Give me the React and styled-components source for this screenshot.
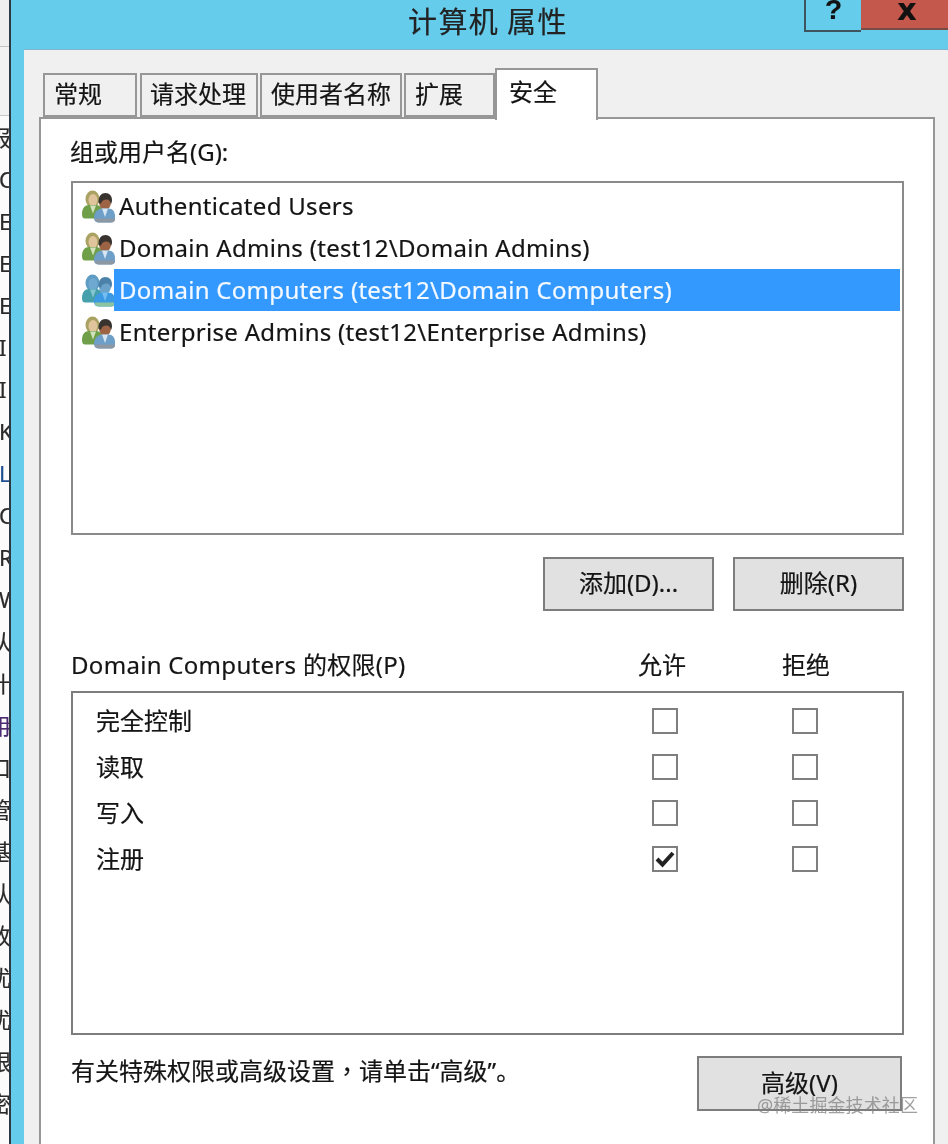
import React from "react";
import styled, { createGlobalStyle } from "styled-components";

const Global = createGlobalStyle`
  html, body { margin: 0; padding: 0; background: #f0f0f0; }
  body { font-family: "Noto Sans", "Noto Sans CJK SC", sans-serif; color: #141414; }
`;

const Page = styled.div`
  display: flex;
  width: 948px;
  height: 1144px;
  overflow: hidden;
  position: relative;
  filter: blur(0.5px);
  -webkit-text-stroke: 0.2px;
`;

const Strip = styled.div`
  width: 9px;
  flex: none;
  background: #fbfbfb;
  border-right: 2px solid #2b3a44;
  overflow: hidden;
`;
const StripHead = styled.div`
  height: 46px;
  background: #efefef;
  border-bottom: 1px solid #c4c4c4;
`;
const StripBand = styled.div`
  height: 68px;
  background: #f2f2f2;
  border-bottom: 1px solid #c8c8c8;
`;
const StripRow = styled.div`
  height: 42px;
  width: 30px;
  margin-left: ${(p) => (p.$cjk ? "-11px" : "-1px")};
  font: 22px/42px "Noto Sans", "Noto Sans CJK SC", sans-serif;
  color: ${(p) => p.$color || "#2a2a2a"};
  white-space: nowrap;
`;

const Window = styled.div`
  flex: 1;
  min-width: 0;
  background: #66ccec;
  display: flex;
  flex-direction: column;
`;
const TitleBar = styled.div`
  height: 49px;
  flex: none;
  display: flex;
  align-items: flex-start;
  padding-left: 397px;
`;
const Title = styled.div`
  font: 29px/40px "Noto Sans CJK SC", sans-serif;
  color: #222;
  white-space: nowrap;
  letter-spacing: 1.4px;
`;
const Controls = styled.div`
  margin-left: auto;
  display: flex;
  height: 32px;
`;
const HelpBtn = styled.div`
  width: 55px;
  height: 30px;
  border-left: 2px solid #3e5560;
  border-bottom: 2px solid #3e5560;
  font: bold 28px/20px "Liberation Sans", sans-serif;
  color: #111;
  text-align: center;
`;
const CloseBtn = styled.div`
  width: 87px;
  height: 30px;
  background: #c4584c;
  border-bottom: 2px solid #7a4a44;
  font: bold 30px/19px "DejaVu Sans", sans-serif;
  color: #111;
  text-align: center;
  padding-left: 5px;
  box-sizing: border-box;
`;

const Body = styled.div`
  flex: 1;
  margin-left: 13px;
  background: #f0f0f0;
  border-top: 1px solid #7fb5cf;
  padding: 18px 0 0 15px;
  display: flex;
  flex-direction: column;
`;
const TabBar = styled.div`
  height: 49px;
  flex: none;
  display: flex;
  align-items: flex-end;
  padding-left: 4px;
  gap: 2px;
`;
const Tab = styled.div`
  box-sizing: border-box;
  width: ${(p) => p.$w}px;
  height: ${(p) => (p.$active ? 52 : 44)}px;
  margin-bottom: ${(p) => (p.$active ? -3 : 0)}px;
  margin-left: ${(p) => p.$ml || 0}px;
  background: ${(p) => (p.$active ? "#fff" : "#f0f0f0")};
  border: 2px solid #979797;
  border-bottom: ${(p) => (p.$active ? "none" : "2px solid #979797")};
  font-size: 24px;
  line-height: ${(p) => (p.$active ? 44 : 38)}px;
  padding-left: ${(p) => p.$pl}px;
  white-space: nowrap;
  position: relative;
  z-index: ${(p) => (p.$active ? 2 : 0)};
`;
const Panel = styled.div`
  flex: 1;
  width: 896px;
  box-sizing: border-box;
  background: #fff;
  border: 2px solid #979797;
  border-bottom: none;
  padding: 17px 29px 0 30px;
  display: flex;
  flex-direction: column;
`;
const Text = styled.div`
  font-size: 24px;
  line-height: 32px;
  white-space: nowrap;
`;
const Comma = styled.span`
  font-family: "Noto Sans CJK TC", sans-serif;
`;
const GroupLabel = styled(Text)`
  margin: 0 0 13px -1px;
`;
const FooterText = styled(Text)`
  margin-top: -2px;
`;
const ListBox = styled.div`
  box-sizing: border-box;
  height: 354px;
  border: 2px solid #8a8a8a;
  padding: 2px 2px 0 9px;
  flex: none;
`;
const UserRow = styled.div`
  display: flex;
  align-items: center;
  height: 42px;
`;
const UserName = styled.div`
  flex: 1;
  height: 42px;
  padding-left: 5px;
  font-size: 24px;
  line-height: 41px;
  letter-spacing: 0.3px;
  white-space: nowrap;
  background: ${(p) => (p.$selected ? "#3399ff" : "transparent")};
  color: ${(p) => (p.$selected ? "#f4f9ff" : "#141414")};
`;
const ButtonRow = styled.div`
  display: flex;
  justify-content: flex-end;
  gap: 19px;
  margin-top: 22px;
`;
const Button = styled.div`
  box-sizing: border-box;
  width: ${(p) => p.$w}px;
  height: ${(p) => p.$h}px;
  background: #e1e1e1;
  border: 2px solid #7d7d7d;
  display: flex;
  align-items: center;
  justify-content: center;
  padding-bottom: 5px;
  font-size: 24px;
  white-space: nowrap;
`;
const PermHeader = styled.div`
  display: grid;
  grid-template-columns: 1fr 144px 144px;
  padding-right: 26px;
  margin: 38px 0 10px;
  font-size: 24px;
  line-height: 32px;
`;
const PermTitle = styled.div`
  letter-spacing: 0.3px;
  white-space: nowrap;
`;
const ColHead = styled.div`
  text-align: center;
`;
const PermBox = styled.div`
  box-sizing: border-box;
  height: 344px;
  flex: none;
  border: 2px solid #7d7d7d;
  padding: 5px 27px 0 23px;
`;
const PermRow = styled.div`
  display: grid;
  grid-template-columns: 1fr 140px 140px;
  height: 46px;
  align-items: center;
  font-size: 24px;
`;
const PermName = styled.div`
  padding-bottom: 4px;
`;
const CheckCell = styled.div`
  display: flex;
  justify-content: center;
`;
const CheckBox = styled.div`
  box-sizing: border-box;
  width: 26px;
  height: 26px;
  border: 2px solid #7f7f7f;
  display: flex;
  align-items: center;
  justify-content: center;
  background: #fff;
`;
const Footer = styled.div`
  display: flex;
  justify-content: space-between;
  align-items: flex-start;
  margin-top: 21px;
  padding-right: 2px;
`;
const Watermark = styled.div`
  position: absolute;
  right: 30px;
  top: 1093px;
  font-size: 18px;
  line-height: 24px;
  color: rgba(130, 130, 130, 0.75);
  white-space: nowrap;
  letter-spacing: 0.1px;
  -webkit-text-stroke: 0;
`;

function UsersIcon({ selected }) {
  const c = selected
    ? { backHair: "#5f9cc4", backFace: "#6fa9d2", backBody: "#45a0ac", backLight: "#86c6d2", hair: "#4c82aa", face: "#6aa2ca", body: "#3c9ae2", bodyLight: "#74bff0", edge: "#8cc4a0" }
    : { backHair: "#a9a262", backFace: "#e0c49c", backBody: "#6f9f48", backLight: "#d2e2bc", hair: "#38332f", face: "#9c6444", body: "#6e9fc9", bodyLight: "#d6e6f2", edge: "#8c98a4" };
  return (
    <svg width="33" height="33" viewBox="0 0 33 33" style={{ flex: "none", marginRight: -1 }}>
      <ellipse cx="10.500" cy="9" rx="7" ry="8.500" fill={c.backHair} />
      <ellipse cx="11" cy="10" rx="4.500" ry="6" fill={c.backFace} />
      <path d="M0 24c0-6 3-9 7-9h7c3 0 6 2 6 6v5c0 1.500-1 2.500-3 2.500H3C1 28.500 0 27 0 24z" fill={c.backBody} />
      <path d="M8 15.500h6l-3 8z" fill={c.backLight} />
      <ellipse cx="23" cy="12.500" rx="6" ry="7.500" fill={c.face} />
      <path d="M16.500 12c0-6 3-9 7-9s6.500 3 6.500 7c0 1.500-.4 3-1 4-.5-2.500-2-4.500-4.500-4.500-3 0-4.500 1-5.500 4-1.500 0-2.500-.5-2.500-1.500z" fill={c.hair} />
      <path d="M12 28c0-6 4-9.500 8.500-9.500h6c4 0 6.500 3 6.500 7.500v3c0 2-1.500 3.500-4 3.500H17c-3 0-5-1.500-5-4.500z" fill={c.body} />
      <path d="M12.500 29.500c.8 2 2.500 3 4.500 3h12c2.500 0 4-1.500 4-3.500l-.2-.5H13z" fill={c.edge} />
      <path d="M20 18.500h6l-3 8.500z" fill={c.bodyLight} />
    </svg>
  );
}

const Check = () => (
  <svg width="20" height="18" viewBox="0 0 20 18">
    <path d="M2 9l5.500 5.500L18 3" fill="none" stroke="#222" strokeWidth="4" />
  </svg>
);

const stripRows = [
  ["报", 1], ["C"], ["E"], ["E"], ["E"], ["I"], ["I"], ["K"], ["L", 0, "#1d4f91"], ["C"], ["R"], ["W"],
  ["从", 1], ["什", 1], ["枏", 1, "#4a2a70"], ["口", 1], ["管", 1], ["基", 1], ["认", 1], ["改", 1], ["优", 1], ["优", 1], ["跟", 1], ["密", 1],
];

const tabs = [
  { label: "常规", w: 94, pl: 9 },
  { label: "请求处理", w: 118, pl: 8, ml: 1 },
  { label: "使用者名称", w: 142, pl: 9 },
  { label: "扩展", w: 91, pl: 9 },
  { label: "安全", w: 103, pl: 12, active: true, ml: -2 },
];

const users = [
  "Authenticated Users",
  "Domain Admins (test12\\Domain Admins)",
  "Domain Computers (test12\\Domain Computers)",
  "Enterprise Admins (test12\\Enterprise Admins)",
];

const perms = [
  ["完全控制", false],
  ["读取", false],
  ["写入", false],
  ["注册", true],
];

export default function App() {
  return (
    <>
      <Global />
      <Page>
        <Strip>
          <StripHead />
          <StripBand />
          {stripRows.map(([t, cjk, color], i) => (
            <StripRow key={i} $cjk={cjk} $color={color}>{t}</StripRow>
          ))}
        </Strip>
        <Window>
          <TitleBar>
            <Title>计算机 属性</Title>
            <Controls>
              <HelpBtn>?</HelpBtn>
              <CloseBtn>x</CloseBtn>
            </Controls>
          </TitleBar>
          <Body>
            <TabBar>
              {tabs.map((t) => (
                <Tab key={t.label} $w={t.w} $pl={t.pl} $ml={t.ml} $active={t.active}>{t.label}</Tab>
              ))}
            </TabBar>
            <Panel>
              <GroupLabel>组或用户名(G):</GroupLabel>
              <ListBox>
                {users.map((u, i) => (
                  <UserRow key={u}>
                    <UsersIcon selected={i === 2} />
                    <UserName $selected={i === 2}>{u}</UserName>
                  </UserRow>
                ))}
              </ListBox>
              <ButtonRow>
                <Button $w={171} $h={54}>添加(D)...</Button>
                <Button $w={171} $h={54}>删除(R)</Button>
              </ButtonRow>
              <PermHeader>
                <PermTitle>Domain Computers 的权限(P)</PermTitle>
                <ColHead>允许</ColHead>
                <ColHead>拒绝</ColHead>
              </PermHeader>
              <PermBox>
                {perms.map(([name, on]) => (
                  <PermRow key={name}>
                    <PermName>{name}</PermName>
                    <CheckCell><CheckBox>{on && <Check />}</CheckBox></CheckCell>
                    <CheckCell><CheckBox /></CheckCell>
                  </PermRow>
                ))}
              </PermBox>
              <Footer>
                <FooterText>有关特殊权限或高级设置<Comma>，</Comma>请单击“高级”。</FooterText>
                <Button $w={205} $h={55}>高级(V)</Button>
              </Footer>
            </Panel>
          </Body>
        </Window>
        <Watermark>@稀土掘金技术社区</Watermark>
      </Page>
    </>
  );
}
